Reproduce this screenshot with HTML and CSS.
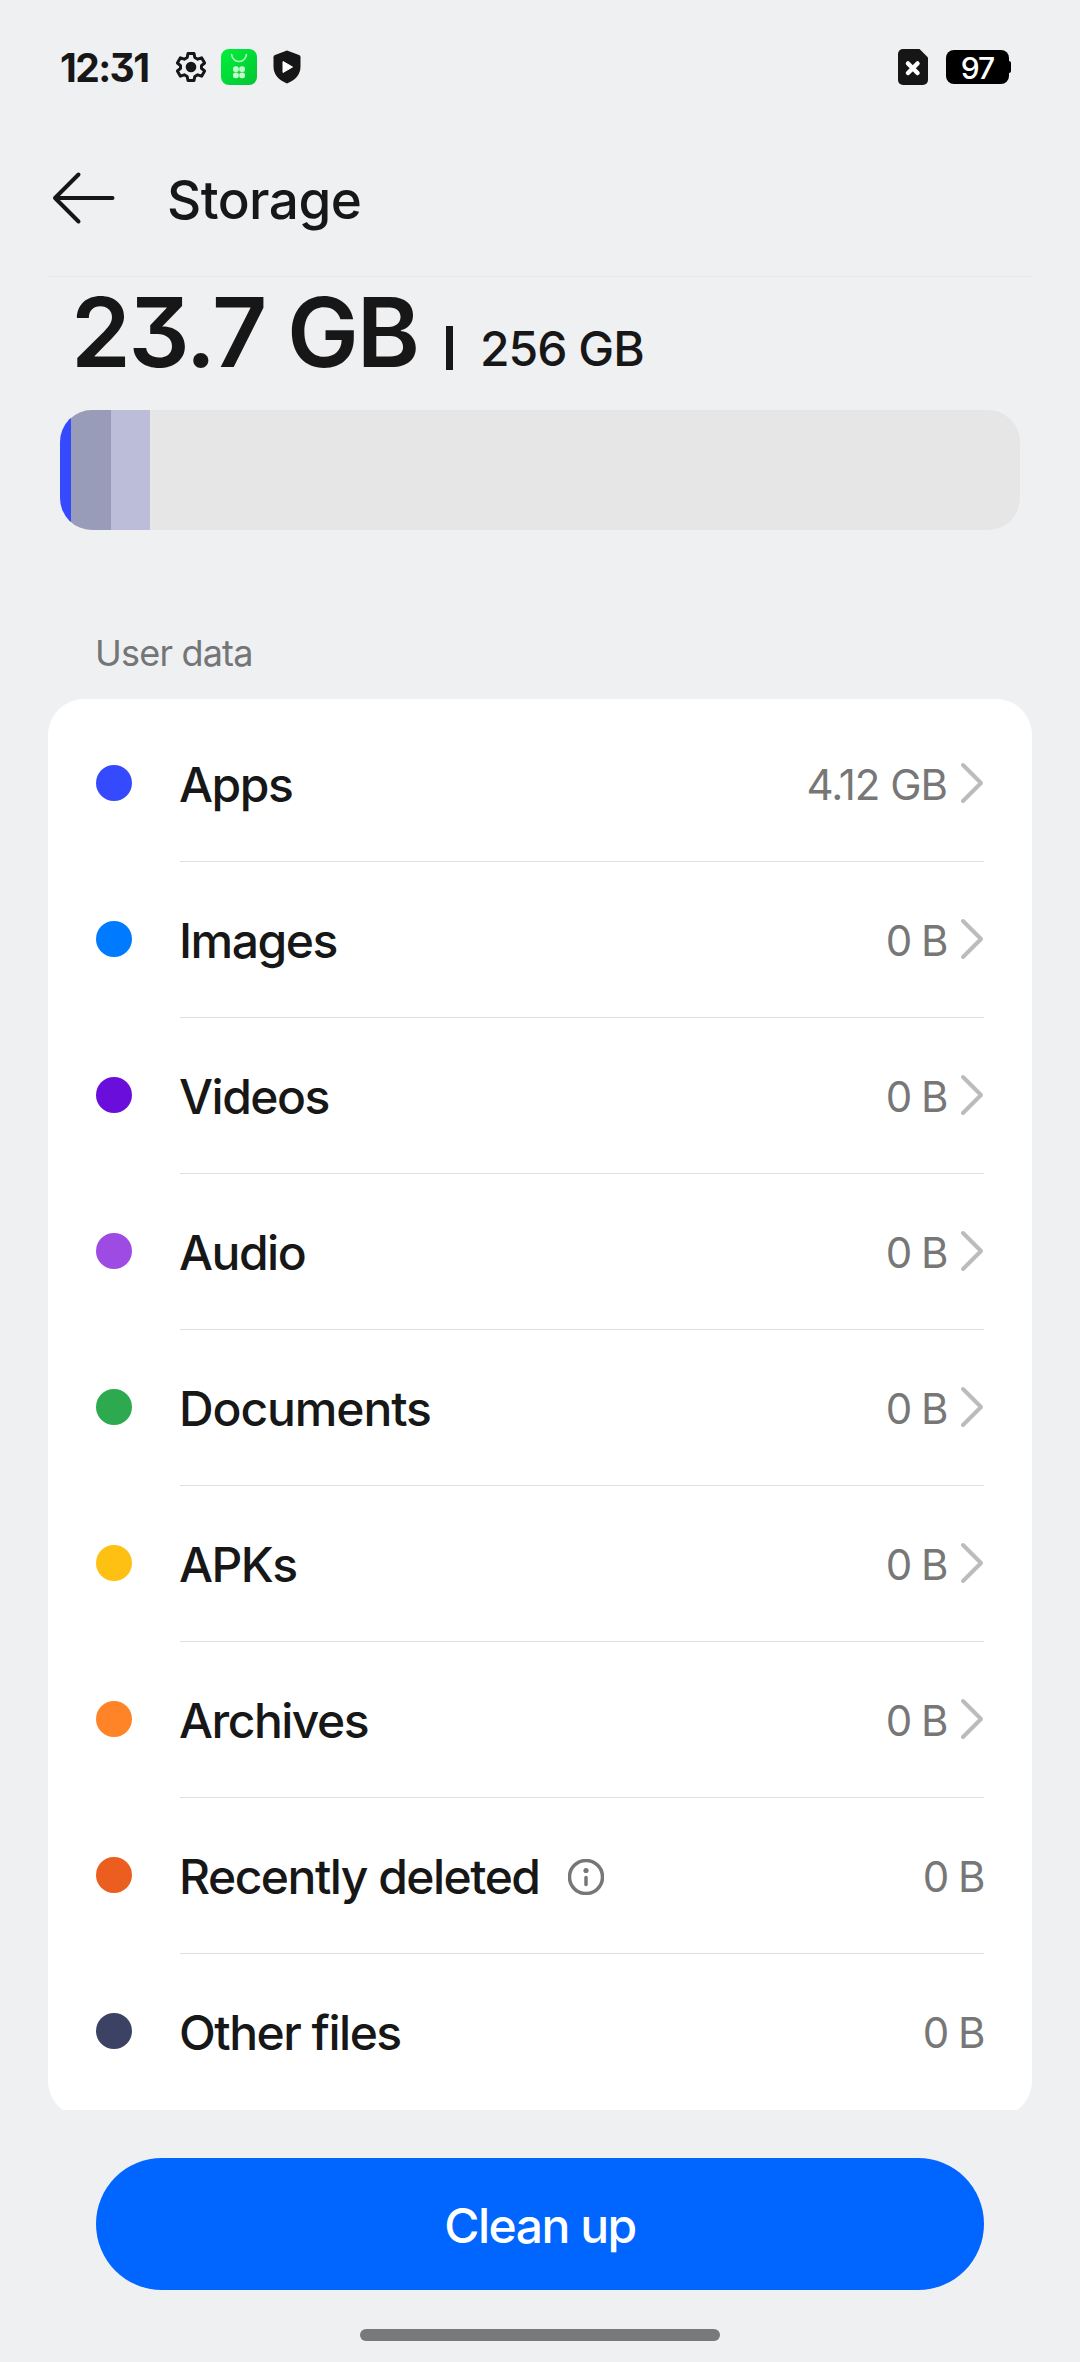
FILE: index.html
```html
<!DOCTYPE html>
<html lang="en">
<head>
<meta charset="utf-8">
<title>Storage</title>
<link rel="stylesheet" href="styles.css">
</head>
<body>
<div class="status">
  <span class="clock">12:31</span>
  <svg class="gear" width="32" height="32" viewBox="0 0 32 32" fill="none" stroke="#161616" stroke-width="3" stroke-linejoin="round"><path d="M13 2.5h6l.8 4 2.9 1.7 3.9-1.4 3 5.2-3.1 2.600v2.800l3.100 2.600-3 5.200-3.900-1.400-2.900 1.700-.8 4h-6l-.8-4-2.900-1.700-3.900 1.400-3-5.200 3.100-2.600v-2.800l-3.100-2.600 3-5.200 3.900 1.400 2.900-1.700z"/><circle cx="16" cy="16" r="5.300" fill="#161616" stroke="none"/></svg>
  <svg class="bag" width="36" height="36" viewBox="0 0 36 36"><defs><linearGradient id="g" x1="0" y1="0" x2="1" y2="1"><stop offset="0" stop-color="#00f03c"/><stop offset="1" stop-color="#04c432"/></linearGradient></defs><rect width="36" height="36" rx="8" fill="url(#g)"/><path d="M10.500 5.500c1 4.500 3.900 7 7.500 7s6.500-2.500 7.500-7" fill="none" stroke="#a6ffb4" stroke-width="1.600" stroke-linecap="round"/><g fill="#c4fbcb"><rect x="12" y="17.300" width="5.800" height="5.800" rx="2.500"/><rect x="18.200" y="17.300" width="5.800" height="5.800" rx="2.500"/><rect x="12" y="23.500" width="5.800" height="5.800" rx="2.500"/><rect x="18.200" y="23.500" width="5.800" height="5.800" rx="2.500"/></g></svg>
  <svg class="shield" width="28" height="34" viewBox="0 0 28 34"><path d="M14 .5 26 5q1.500.6 1.500 2.200v9.300c0 8-5 13.500-13.500 17C5.500 30 .5 24.500.5 16.500V7.200Q.5 5.600 2 5z" fill="#161616"/><path d="M10 11.500v11l9.500-5.500z" fill="#fff" stroke="#fff" stroke-linejoin="round"/></svg>
  <span class="spacer"></span>
  <svg class="sim" width="30" height="36" viewBox="0 0 30 36"><path d="M5 0h16.500l8.500 8.500V31a5 5 0 0 1-5 5H5a5 5 0 0 1-5-5V5a5 5 0 0 1 5-5z" fill="#161616"/><path d="m10 14.500 9.500 9.500m0-9.500L10 24" stroke="#fff" stroke-width="4.500" stroke-linecap="round"/></svg>
  <span class="battery">97</span><span class="nub"></span>
</div>
<header class="header">
  <svg width="66" height="54" viewBox="0 0 66 54" fill="none" stroke="#161616" stroke-width="4" stroke-linecap="round" stroke-linejoin="round"><path d="M28.500 3.500 5 27l23.500 23.500M5 27h57.500"/></svg>
  <h1>Storage</h1>
</header>
<main>
  <div class="summary"><span class="used">23.7 GB</span><span class="bar"></span><span class="total">256 GB</span></div>
  <div class="usage"><span class="seg-apps"></span><span class="seg-system"></span><span class="seg-reserved"></span></div>
  <h2>User data</h2>
  <div class="clip">
    <ul class="card">
      <li><i class="dot apps"></i><div class="line"><span class="name">Apps</span><span class="val">4.12 GB</span><svg class="chev" viewBox="0 0 24 42"><path d="M3 3 21 21 3 39"/></svg></div></li>
      <li><i class="dot images"></i><div class="line"><span class="name">Images</span><span class="val zero">0 B</span><svg class="chev" viewBox="0 0 24 42"><path d="M3 3 21 21 3 39"/></svg></div></li>
      <li><i class="dot videos"></i><div class="line"><span class="name">Videos</span><span class="val zero">0 B</span><svg class="chev" viewBox="0 0 24 42"><path d="M3 3 21 21 3 39"/></svg></div></li>
      <li><i class="dot audio"></i><div class="line"><span class="name">Audio</span><span class="val zero">0 B</span><svg class="chev" viewBox="0 0 24 42"><path d="M3 3 21 21 3 39"/></svg></div></li>
      <li><i class="dot docs"></i><div class="line"><span class="name wide">Documents</span><span class="val zero">0 B</span><svg class="chev" viewBox="0 0 24 42"><path d="M3 3 21 21 3 39"/></svg></div></li>
      <li><i class="dot apks"></i><div class="line"><span class="name">APKs</span><span class="val zero">0 B</span><svg class="chev" viewBox="0 0 24 42"><path d="M3 3 21 21 3 39"/></svg></div></li>
      <li><i class="dot archives"></i><div class="line"><span class="name">Archives</span><span class="val zero">0 B</span><svg class="chev" viewBox="0 0 24 42"><path d="M3 3 21 21 3 39"/></svg></div></li>
      <li><i class="dot deleted"></i><div class="line"><span class="name">Recently deleted</span><svg class="info" viewBox="0 0 36 36"><circle cx="18" cy="18" r="16.500"/><path d="M18 18.500v7"/><circle class="pt" cx="18" cy="11.500" r="2.600"/></svg><span class="val zero">0 B</span></div></li>
      <li><i class="dot other"></i><div class="line"><span class="name">Other files</span><span class="val zero">0 B</span></div></li>
    </ul>
  </div>
  <button class="clean">Clean up</button>
</main>
<div class="home"></div>
</body>
</html>
```
FILE: styles.css
```css
* { box-sizing: border-box; }
body {
  margin: 0;
  width: 1080px;
  height: 2362px;
  overflow: hidden;
  background: #eff0f2;
  color: #171717;
  font-family: Inter, "Liberation Sans", sans-serif;
  font-feature-settings: "cv09";
}
h1, h2, ul { margin: 0; padding: 0; font-weight: 500; }
span { white-space: nowrap; }
svg { display: block; flex: none; }

.status { display: flex; align-items: center; height: 134px; padding: 0 69px 0 60px; }
.clock { width: 115px; font-size: 39px; font-weight: 650; letter-spacing: -1.6px; }
.bag { margin-left: 14px; }
.shield { margin-left: 16px; }
.spacer { flex: 1; }
.battery {
  width: 63px; height: 34px; margin-left: 18px;
  border-radius: 8px; background: #000; color: #fff;
  font-size: 30px; line-height: 36px; font-weight: 500; text-align: center; letter-spacing: -1px;
}
.nub { width: 2px; height: 12px; background: #000; border-radius: 0 2px 2px 0; }

.header {
  display: flex; align-items: center; height: 143px; margin: 0 48px; padding-bottom: 15px;
  border-bottom: 1px solid #e8e9ea;
}
.header svg { margin-left: 2px; }
.header h1 { margin-left: 51px; padding-top: 4px; font-size: 53px; line-height: 64px; letter-spacing: -.55px; }

.summary { display: flex; align-items: baseline; height: 133px; padding-left: 71px; }
.used { width: 375px; font-size: 96px; line-height: 110px; font-weight: 600; letter-spacing: -2.2px; }
.bar { width: 7px; height: 44px; background: #171717; transform: translateY(3px); }
.total { margin-left: 27px; font-size: 48px; font-weight: 500; letter-spacing: -1px; transform: translateY(-1px); }

.usage { display: flex; height: 120px; margin: 0 60px; border-radius: 32px; overflow: hidden; background: #e6e6e6; }
.seg-apps { width: 11px; background: #354afd; }
.seg-system { width: 40px; background: #999cb8; }
.seg-reserved { width: 39px; background: #bbbdd9; }

h2 { height: 169px; padding: 101px 0 0 95px; font-size: 36px; line-height: 44px; font-weight: 400; letter-spacing: -.8px; color: #747577; }

.clip { height: 1411px; margin: 0 48px; overflow: hidden; }
.card { height: 1418px; padding: 7px 48px 0; border-radius: 36px; background: #fff; list-style: none; }
.card li { display: flex; align-items: center; height: 156px; }
.dot { width: 36px; height: 36px; margin-bottom: 2px; border-radius: 50%; }
.line { display: flex; align-items: center; flex: 1; height: 156px; margin-left: 48px; border-bottom: 1px solid #dfdfdf; }
li:last-child .line { border-color: transparent; }
.name { margin-left: -1px; padding-top: 3px; font-size: 48px; line-height: 58px; font-weight: 500; letter-spacing: -1.5px; }
.name.wide { letter-spacing: -1.1px; }
.val { margin-left: auto; padding-top: 3px; font-size: 42px; line-height: 52px; font-weight: 400; letter-spacing: -1px; color: #777; }
.val.zero { letter-spacing: -1.5px; }
.chev { width: 24px; height: 42px; margin: 0 0 1px 13px; fill: none; stroke: #bcbcbc; stroke-width: 4; stroke-linecap: round; stroke-linejoin: round; }
.info { width: 36px; height: 36px; margin: 2px 0 0 28px; fill: none; stroke: #777; stroke-width: 3.5; stroke-linecap: round; }
.info .pt { fill: #777; stroke: none; }

.apps { background: #354afd; }
.images { background: #007aff; }
.videos { background: #6a0fdb; }
.audio { background: #9d4be3; }
.docs { background: #2da94f; }
.apks { background: #ffc014; }
.archives { background: #ff8427; }
.deleted { background: #ec5e1f; }
.other { background: #3b4264; }

.clean {
  display: block; width: 888px; height: 132px; margin: 48px auto 0; padding: 3px 0 0;
  border: 0; border-radius: 66px; background: #06f; color: #fff;
  font: 500 48px/58px Inter, "Liberation Sans", sans-serif; letter-spacing: -1.5px;
}
.home { width: 360px; height: 12px; margin: 39px auto 0; border-radius: 6px; background: #797979; }
```
